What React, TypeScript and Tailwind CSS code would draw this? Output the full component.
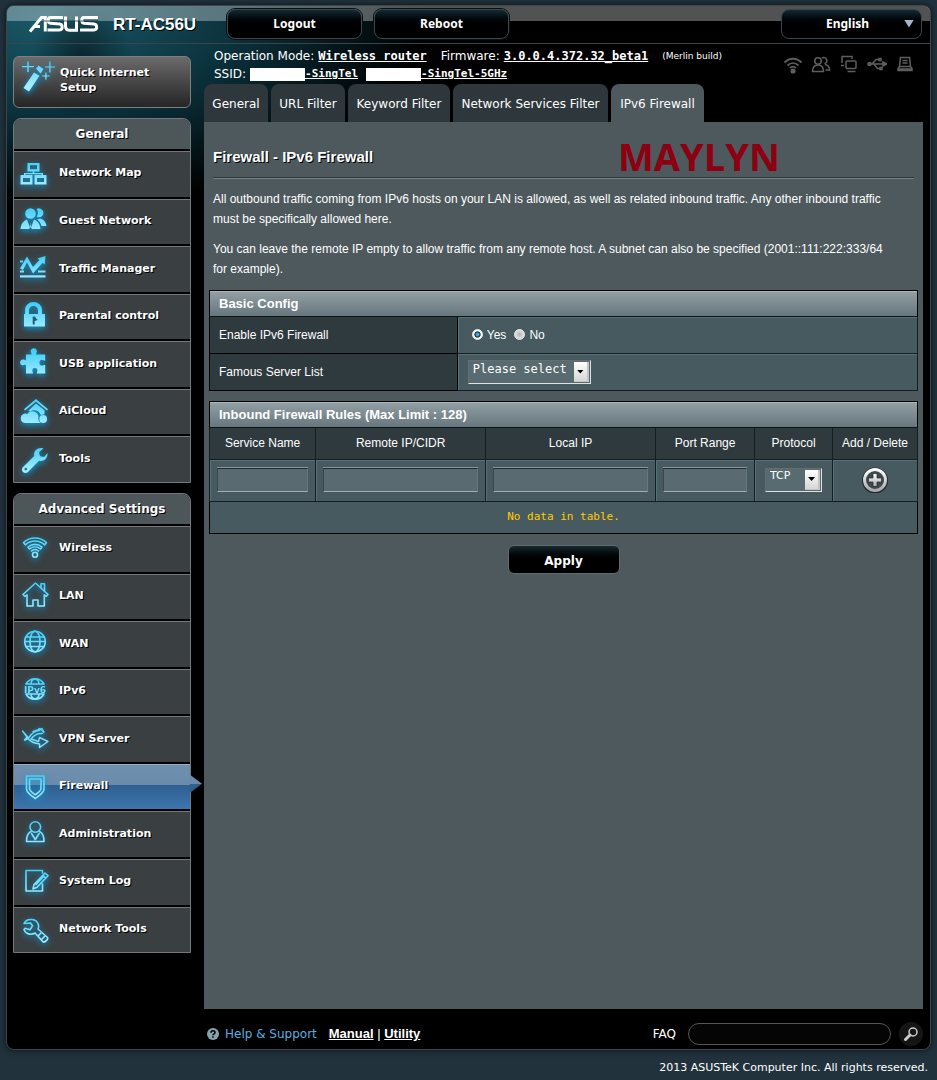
import React, { useState, type ReactNode } from 'react';
import clsx from 'clsx';

const verdana = "font-['DejaVu_Sans',Verdana,sans-serif]";
const arial = "font-['Liberation_Sans',Arial,sans-serif]";
const mono = "font-['DejaVu_Sans_Mono',monospace]";
const shadow = '[text-shadow:1px_1px_0_#000]';

const line = { fill: 'none', stroke: 'url(#ice)', strokeWidth: 1.6, strokeLinejoin: 'round', strokeLinecap: 'round' } as const;

const MenuIcon = ({ children }: { children: ReactNode }) => (
  <svg
    viewBox="0 0 32 32"
    className="size-8 shrink-0 overflow-visible [filter:drop-shadow(0_2px_3px_#0a9ad8)]"
    fill="url(#ice)"
    aria-hidden="true"
  >
    {children}
  </svg>
);

const generalMenu = [
  {
    label: 'Network Map',
    icon: (
      <>
        <path fillRule="evenodd" d="M9.500 5h12v8.500h-12zM12 7.300v4h7v-4z" />
        <path fillRule="evenodd" d="M2.500 17h12v9.500h-12zM5 20v4h7v-4zM16.500 17h12v9.500h-12zM19 20v4h7v-4z" />
        <path d="M14.700 13h1.600v2H25v2h-1.500v-.8h-16v.8H6v-2h8.700z" />
      </>
    ),
  },
  {
    label: 'Guest Network',
    icon: (
      <>
        <circle cx="12.500" cy="8.500" r="5.300" />
        <path d="M18.500 4a4.500 4.500 0 1 1 2 8.300c-.8 0-1.300-.2-1.800-.6a7 7 0 0 0-.2-7.700z" />
        <path d="M2.500 24c.5-5 3-8.500 6.500-9.500l3 8 .5-5 .5 5 3-8c3.500 1 6 4.500 6.500 9.500h-8.500l-1.500-2-1.500 2z" />
        <path d="M19 14.500l3-1c4 1 6 4 6.500 7.500h-5c-.7-3-2.300-5-4.500-6.500z" />
      </>
    ),
  },
  {
    label: 'Traffic Manager',
    icon: (
      <>
        <path d="M2 7.500h3v2H2zM2 22.300h25.500v2.200H2zM2 17.500h4v2H2zM20 17.500h7.500v2H20z" />
        <path d="M2 15.500L9 3.500l6 10.500 6.500-7-2-1.500 8-2.500-.8 8.500-2-1.700L15 20.500 9 9.500 5 17z" />
      </>
    ),
  },
  {
    label: 'Parental control',
    icon: (
      <>
        <path fillRule="evenodd" d="M7 13V9a8.500 8 0 0 1 17 0v4h3v12.500H6V13zM11 13h9V9.500a4.500 4.500 0 0 0-9 0z" />
        <path fill="#1d5c7a" d="M14.700 15.500h2l3 3.500-3 1v3.500h-2z" />
      </>
    ),
  },
  {
    label: 'USB application',
    icon: (
      <path d="M8 6.500h5.500c.6-1-1-2-.8-3.800a3.200 3.200 0 0 1 6.200 0c.2 1.800-1.300 2.800-.7 3.800h9v6c-1 .7-2.200-.9-3.700-.7-2.800.5-2.800 5.400 0 5.800 1.500.2 2.700-1.300 3.700-.6v8.500h-8.300c-.6-1 .9-2 .5-3.600-.6-2.400-4.600-2.400-5.100 0-.3 1.600 1.200 2.600.6 3.600H8V17c-.7-1-2 .6-3.700.3a3 3 0 0 1 0-5.800C6 11.200 7.300 12.700 8 12z" />
    ),
  },
  {
    label: 'AiCloud',
    icon: (
      <>
        <path d="M18 3L30 13.200l-1 1.300L18 5.800 7 14.500l-1-1.300z" />
        <path d="M18 7.500l8.500 6.700v4a4.500 4.500 0 0 0-3.500 1.300c-1.500-5-7-6.500-11-4l-1.700-.8z" />
        <path d="M7 27a4.700 4.700 0 0 1-.8-9.200c2-.6 2.800.4 3 1 0-3 7-6.500 11 .2 1 2-.6 2.700.3 5 .4 1.400 1.300 2.400 2.500 3z" />
        <circle cx="25.200" cy="23" r="3.900" />
      </>
    ),
  },
  {
    label: 'Tools',
    icon: (
      <path
        fillRule="evenodd"
        d="M25.500 5.500l-4.500 3.800 1 4 4 .8 3.500-4.100c.4 5-3.500 9-8.500 7.700L10.500 28.500a3.600 3.600 0 1 1-5-5L16.300 13C15 8 20 3.500 25.500 5.500zM7.800 24.700a1.300 1.300 0 1 0 .1 0z"
      />
    ),
  },
];

const advancedMenu = [
  {
    label: 'Wireless',
    icon: (
      <g {...line}>
        <path d="M5.500 9.500c6.500-6 16.500-6 23 0l-1.800 2.300c-5.600-5-13.800-5-19.400 0z" />
        <path d="M10 14c4.200-3.500 9.800-3.500 14 0l-1.500 2c-3.300-2.700-7.700-2.700-11 0z" />
        <path d="M13.500 18c2-1.700 5-1.700 7 0" />
        <circle cx="17" cy="21.800" r="2.500" />
      </g>
    ),
  },
  {
    label: 'LAN',
    icon: (
      <g {...line}>
        <path d="M5 14.500L17.500 3 30 14.500l-1.700 1.800-2-1.500V26H20v-6h-5v6H9V14.800l-2.300 1.500z" />
        <path d="M23 7.500V3.800h3.500v7" />
      </g>
    ),
  },
  {
    label: 'WAN',
    icon: (
      <g {...line}>
        <circle cx="17" cy="13.500" r="10.300" />
        <ellipse cx="17" cy="13.500" rx="5" ry="10.300" />
        <path d="M8 9h18M6.700 13.500h20.600M8 18.500h18" />
      </g>
    ),
  },
  {
    label: 'IPv6',
    icon: (
      <>
        <g {...line}>
          <path d="M8 9a10.300 10.300 0 0 1 18 0zM8 19a10.300 10.300 0 0 0 18 0zM13 8c1-5 7-5 8 0M13 20c1 5 7 5 8 0" />
        </g>
        <text
          x="17"
          y="17.500"
          textAnchor="middle"
          fontSize="9"
          fontFamily="DejaVu Sans"
          className="[text-shadow:none]"
        >
          IPv6
        </text>
      </>
    ),
  },
  {
    label: 'VPN Server',
    icon: (
      <g {...line} strokeWidth={1.4}>
        <path d="M4.500 8l6 7c4-6 7-7.500 11-7.500l-.5-2 5 3.500-2 1.500c-5-.5-8 1.500-11 5.500l7.500 2.500 1-4L30 18.500l-8.500 6 .2-3.500c-5-.5-9-2-11.700-5.500-1 1-2 1.500-3.500 1.500L9 14z" />
        <path d="M15 8.500l9-3 1.500 3" />
      </g>
    ),
  },
  {
    label: 'Firewall',
    icon: (
      <g {...line}>
        <path d="M8.500 5h17.500v13c0 4-5 6.500-8.700 9.500-3.800-3-8.800-5.500-8.800-9.500z" />
        <path d="M11.500 8h11.500v9.500c0 2.500-3 4.200-5.700 6.300-2.800-2.100-5.800-3.800-5.800-6.300z" />
      </g>
    ),
  },
  {
    label: 'Administration',
    icon: (
      <g {...line}>
        <circle cx="17.300" cy="9" r="5.300" />
        <path d="M13 13.500c-3 1.500-4.500 5.500-4.500 10h17.500c0-4.500-1.500-8.500-4.500-10M13.500 15.500l3.800 6 3.800-6" />
      </g>
    ),
  },
  {
    label: 'System Log',
    icon: (
      <g {...line}>
        <path d="M24.500 7V4.500H8V25h16.500v-7" />
        <path d="M15 23l1-4.500L27 7l3 2.700-11 11.500zM25 9.500l2.700 2.500M18 18.500l8-8.500" />
      </g>
    ),
  },
  {
    label: 'Network Tools',
    icon: (
      <g {...line}>
        <path d="M6 10.500c3-6 13-5 14.500 1.500.3 1.800 0 3-.5 4l9.500 8.500c1 1.500-2.500 5.500-4.500 4.300L17 20c-4 2.500-9.500 1-11-3.500l1-1.200 5 1.500 2.500-4-2-2.800z" />
        <path d="M20.500 22.500l2.500-2.500M24 26l2.500-2.500" />
      </g>
    ),
  },
];

const tabs = [
  { label: 'General', className: 'w-16' },
  { label: 'URL Filter', className: 'w-[74px]' },
  { label: 'Keyword Filter', className: 'w-[102px]' },
  { label: 'Network Services Filter', className: 'w-[155px]' },
  { label: 'IPv6 Firewall', className: 'w-[93px]' },
];

const Menu = ({
  title,
  items,
  active,
  onSelect,
  className,
}: {
  title: string;
  items: { label: string; icon: ReactNode }[];
  active: string;
  onSelect: (label: string) => void;
  className: string;
}) => (
  <nav aria-label={title} className="rounded-t-lg border border-[#70787b] bg-[#3a3f41]">
    <h2
      className={clsx(
        'flex h-8 items-center justify-center rounded-t-lg border-b-2 border-black bg-[#4d5659] text-xs font-bold',
        shadow
      )}
    >
      {title}
    </h2>
    <ul className={clsx('flex flex-col', className)}>
      {items.map((item) => (
        <li key={item.label} className="group flex grow flex-col">
          <a
            href="#"
            onClick={(e) => {
              e.preventDefault();
              onSelect(item.label);
            }}
            className={clsx(
              'relative flex grow items-center gap-[9px] border-t pb-px pl-1 text-[11px] font-bold',
              'border-b-2 border-b-black group-last:border-b-0',
              shadow,
              item.label === active
                ? 'border-t-[#8fb0cc] bg-[linear-gradient(#7090ae_0,#6a8bab_46%,#2f6090_46%,#3d75ad_100%)]'
                : 'border-t-[#72787b]'
            )}
          >
            <MenuIcon>{item.icon}</MenuIcon>
            {item.label}
            {item.label === active && (
              <span className="absolute top-2.5 left-full h-[18px] w-3 bg-[linear-gradient(#6a8bab_50%,#2f6090_50%)] [clip-path:polygon(0_0,100%_50%,0_100%)]" />
            )}
          </a>
        </li>
      ))}
    </ul>
  </nav>
);

const Sidebar = () => {
  const [active, setActive] = useState('Firewall');
  return (
    <aside className="flex w-[178px] shrink-0 flex-col gap-2.5">
      <a
        href="#"
        className={clsx(
          'flex h-[52px] gap-2 rounded-md border border-[#7c8082] bg-linear-to-b from-[#6b6b6b] to-[#262626] pl-1.5 text-[11px] leading-[15px] font-bold',
          shadow
        )}
      >
        <MenuIcon>
          <path d="M14 15.500l5.500 3.300L9 34.500 3.500 31zM16 11.500l2.500-3 5 3.500-3 4.500z" />
          <path d="M7.300 4.500h1.400V9H14v1.200H8.700V15H7.300v-4.800H2V9h5.300zM29.300 4.500h1.200v5H35v1h-4.500v5h-1.200v-5H25v-1h4.300zM25.300 15.500h1.200v3h3v1h-3v3h-1.200v-3h-3v-1h3z" />
        </MenuIcon>
        <span className="w-24 pt-2">Quick Internet Setup</span>
      </a>
      <Menu title="General" items={generalMenu} active={active} onSelect={setActive} className="min-h-[331px]" />
      <Menu
        title="Advanced Settings"
        items={advancedMenu}
        active={active}
        onSelect={setActive}
        className="min-h-[426px]"
      />
    </aside>
  );
};

const DarkButton = ({ children, className }: { children: ReactNode; className: string }) => (
  <button
    type="button"
    className={clsx(
      "flex items-center justify-center rounded-lg border border-[#39474d] bg-linear-to-b from-[#152a33] to-black to-60% font-['Noto_Sans',sans-serif] text-xs font-bold shadow-[0_0_0_1px_#0a0f12]",
      className
    )}
  >
    {children}
  </button>
);

const Header = () => (
  <header className="flex h-[38px] items-center rounded-t-md border-b border-[#3b4548] bg-[linear-gradient(rgba(255,255,255,0.32)_15px,transparent_15px)] pr-2 pb-0.5 pl-[22px]">
    <svg viewBox="0 0 70 18" className="h-[18px] w-[70px]" role="img" aria-label="ASUS">
      <g fill="none" stroke="#fff" strokeWidth="3">
        <path d="M1 16.500L12.500 2.500h3.800v14M6 11.500h5" />
        <path d="M34 2.500H21.500c-3 0-3 5.500 0 5.800l9 .7c3.500.3 3.500 6 0 6H18.500" />
        <path d="M36.500 1.500v9.500c0 3 1 4.200 3.500 4.200h7.500V1.500" />
        <path d="M69 2.500H55c-3 0-3 5.500 0 5.800l10 .7c3.500.3 3.500 6 0 6H51" />
      </g>
      <path d="M14 6h55" stroke="#16333c" strokeWidth="0.800" />
    </svg>
    <span className={clsx('ml-3.5 w-[114px] pt-1 text-[17px] font-bold', arial, shadow)}>RT-AC56U</span>
    <DarkButton className="h-[30px] w-[135px]">Logout</DarkButton>
    <DarkButton className="ml-3 h-[30px] w-[135px]">Reboot</DarkButton>
    <div className="relative ml-auto">
      <select
        aria-label="Language"
        className="block h-[30px] w-[141px] appearance-none rounded-lg border border-[#39474d] bg-linear-to-b from-[#152a33] to-black to-60% pr-2 text-center font-['Noto_Sans',sans-serif] text-xs font-bold"
      >
        <option>English</option>
      </select>
      <span className="pointer-events-none absolute top-[11px] right-2 h-2 w-2.5 bg-[#a5b4c8] [clip-path:polygon(0_0,100%_0,50%_100%)]" />
    </div>
  </header>
);

const StatusIcons = () => (
  <div className="flex gap-2 pt-2.5 pr-2 text-[#5e5e5e]">
    {[
      <>
        <path d="M1.500 8.500c5-5 12-5 17 0M4.500 11.500c3.300-3.300 7.700-3.300 11 0M7 14c1.800-1.700 4.200-1.700 6 0" strokeWidth="1.800" />
        <circle cx="10" cy="17" r="1.800" fill="currentColor" />
      </>,
      <>
        <circle cx="7" cy="7" r="3.200" />
        <path d="M1.500 17.500c0-4 2-6.500 5.500-6.500s5.500 2.500 5.500 6.500zM11 4a3.200 3.200 0 1 1 2.500 5.800M14 10.500c3 .5 4.500 2.500 4.500 5.500h-4" />
      </>,
      <>
        <path d="M13 5V2.500H3V9M2 11.500h3" />
        <rect x="7" y="7" width="10" height="7.500" rx="1" />
        <path d="M8.500 17.500h8" />
      </>,
      <>
        <path d="M1 10h16M5 10l4-4.500h3M7 10l3.500 4.500H13" />
        <path d="M16 8l4 2-4 2z" fill="currentColor" />
        <circle cx="2.500" cy="10" r="1.500" fill="currentColor" />
        <path d="M12 4.500h2v2h-2zM13 13.500h2v2h-2z" />
      </>,
      <>
        <path d="M5.500 3.500h9l1 9h-11zM7.500 6.500h5M7.500 9h5M4.500 12.500l-1.500 2v2h14v-2l-1.500-2" />
        <path d="M3 15.500h14" strokeWidth="2.500" />
      </>,
    ].map((shape, i) => (
      <svg
        key={i}
        viewBox="0 0 20 20"
        className="size-5"
        fill="none"
        stroke="currentColor"
        strokeWidth="1.500"
        aria-hidden="true"
      >
        {shape}
      </svg>
    ))}
  </div>
);

const Info = () => (
  <div className="flex h-10 justify-between pl-2.5 text-xs leading-[18px]">
    <div className="pt-[3px] whitespace-nowrap">
      <div className="flex">
        Operation Mode:
        <a href="#" className={clsx('ml-1 font-bold underline', mono)}>
          Wireless router
        </a>
        <span className="ml-3.5">Firmware:</span>
        <a href="#" className={clsx('ml-1 font-bold underline', mono)}>
          3.0.0.4.372.32_beta1
        </a>
        <span className="ml-3.5 text-[9px]">(Merlin build)</span>
      </div>
      <div className="flex items-center">
        SSID:
        <span className="ml-1 h-[13px] w-[55px] bg-white" />
        <span className={clsx('text-[11px] font-bold underline', mono)}>-SingTel</span>
        <span className="ml-2 h-[13px] w-[55px] bg-white" />
        <span className={clsx('text-[11px] font-bold underline', mono)}>-SingTel-5GHz</span>
      </div>
    </div>
    <StatusIcons />
  </div>
);

const Tabs = () => {
  const [current, setCurrent] = useState('IPv6 Firewall');
  return (
    <div role="tablist" className="flex gap-[3px]">
      {tabs.map((tab) => (
        <button
          key={tab.label}
          type="button"
          role="tab"
          aria-selected={tab.label === current}
          onClick={() => setCurrent(tab.label)}
          className={clsx(
            'h-[38px] rounded-t-lg pt-0.5 text-xs whitespace-nowrap',
            tab.className,
            tab.label === current ? 'bg-[#4d595d]' : 'bg-[#2e383c]'
          )}
        >
          {tab.label}
        </button>
      ))}
    </div>
  );
};

const Dropdown = ({
  id,
  label,
  value,
  className,
}: {
  id: string;
  label?: string;
  value: string;
  className: string;
}) => (
  <div className="relative inline-block align-middle">
    <select
      id={id}
      aria-label={label}
      className={clsx(
        'block h-6 appearance-none border border-t-[#6b6b6b] border-r-[#e0e0e0] border-b-[#e0e0e0] border-l-[#6b6b6b] bg-[#576b71] pb-1.5 pl-1 text-white',
        className
      )}
    >
      <option>{value}</option>
    </select>
    <span className="pointer-events-none absolute top-0.5 right-0.5 flex h-5 w-[15px] items-center justify-center border-r-2 border-b border-[#c4c4c4] bg-linear-to-b from-white to-[#d6d6d6]">
      <span className="h-1 w-[7px] bg-black [clip-path:polygon(0_0,100%_0,50%_100%)]" />
    </span>
  </div>
);

const heading =
  'h-[26px] border-b border-[#0c1416] bg-linear-to-b from-[#92a0a5] to-[#66757c] pl-[9px] text-left text-[13px] font-bold shadow-[inset_0_1px_0_#a9b6bb]';
const cell = 'border border-[#141d20] bg-[#475a5f] shadow-[inset_1px_1px_0_#5a7077]';

const BasicConfig = () => {
  const [enabled, setEnabled] = useState(true);
  return (
    <table className="w-full table-fixed border-collapse border border-black">
      <colgroup>
        <col className="w-[35%]" />
        <col />
      </colgroup>
      <thead>
        <tr>
          <th colSpan={2} className={heading}>
            Basic Config
          </th>
        </tr>
      </thead>
      <tbody>
        <tr className="h-[37px]">
          <th scope="row" className="border border-black bg-[#2f3a3e] pl-[9px] text-left font-normal">
            Enable IPv6 Firewall
          </th>
          <td className={cell}>
            <div className="flex items-center pl-3.5">
              {['Yes', 'No'].map((option) => (
                <label key={option} className="mr-2 flex items-center gap-1">
                  <input
                    type="radio"
                    name="ipv6_fw"
                    checked={enabled === (option === 'Yes')}
                    onChange={() => setEnabled(option === 'Yes')}
                    className="mb-0.5 size-[11px] appearance-none rounded-full border border-[#e4e4e4] bg-[radial-gradient(#b4b4b4,#f4f4f4)] checked:bg-[radial-gradient(#3aa8e8_20%,#112233_42%,#ffffff_56%)]"
                  />
                  {option}
                </label>
              ))}
            </div>
          </td>
        </tr>
        <tr className="h-[37px]">
          <th scope="row" className="border border-black bg-[#2f3a3e] pl-[9px] text-left font-normal">
            <label htmlFor="famous">Famous Server List</label>
          </th>
          <td className={clsx(cell, 'pl-2.5')}>
            <Dropdown id="famous" value="Please select" className={clsx('w-[123px] text-xs', mono)} />
          </td>
        </tr>
      </tbody>
    </table>
  );
};

const RulesTable = () => (
  <table className="w-full table-fixed border-collapse border border-black text-center">
    <colgroup>
      <col className="w-[15%]" />
      <col className="w-[24%]" />
      <col className="w-[24%]" />
      <col className="w-[14%]" />
      <col className="w-[11%]" />
      <col className="w-[12%]" />
    </colgroup>
    <thead>
      <tr>
        <th colSpan={6} className={heading}>
          Inbound Firewall Rules (Max Limit : 128)
        </th>
      </tr>
      <tr className="h-8">
        {['Service Name', 'Remote IP/CIDR', 'Local IP', 'Port Range', 'Protocol', 'Add / Delete'].map((name) => (
          <th key={name} className="border border-[#141d20] bg-[#2f3a3e] pb-0.5 font-normal">
            {name}
          </th>
        ))}
      </tr>
    </thead>
    <tbody>
      <tr className="h-[42px]">
        {['Service Name', 'Remote IP/CIDR', 'Local IP', 'Port Range'].map((name) => (
          <td key={name} className={clsx(cell, 'px-[7px] pb-0.5')}>
            <input
              type="text"
              aria-label={name}
              className="block h-6 w-full border border-t-[#20282b] border-r-[#69777d] border-b-[#a3adb1] border-l-[#3c464a] bg-[#596a70] px-1 shadow-[0_-1px_0_#8b979b]"
            />
          </td>
        ))}
        <td className={clsx(cell, 'pb-0.5')}>
          <Dropdown id="proto" label="Protocol" value="TCP" className={clsx('w-[57px] text-[11px]', verdana)} />
        </td>
        <td className={clsx(cell, 'pb-0.5')}>
          <button type="button" aria-label="Add rule" className="block w-full">
            <svg viewBox="0 0 26 26" className="mx-auto size-[26px]">
              <defs>
                <linearGradient id="steel" x1="0" y1="0" x2="0" y2="1">
                  <stop offset="0" stopColor="#fff" />
                  <stop offset="1" stopColor="#a8a8a8" />
                </linearGradient>
              </defs>
              <circle cx="13" cy="13.500" r="11" fill="none" stroke="#20282b" strokeWidth="4" />
              <circle cx="13" cy="13" r="10.500" fill="#3c4a4f" stroke="url(#steel)" strokeWidth="3" />
              <path d="M11 6.500h4V11h4.500v4H15v4.500h-4V15H6.500v-4H11z" fill="url(#steel)" stroke="#20282b" strokeWidth="0.700" />
            </svg>
          </button>
        </td>
      </tr>
      <tr className="h-8">
        <td colSpan={6} className={clsx('border border-black bg-[#475a5f] text-[11px] text-[#ffcc00]', mono)}>
          No data in table.
        </td>
      </tr>
    </tbody>
  </table>
);

const Footer = () => (
  <footer className="flex items-center pt-[13px] pl-[3px] text-xs whitespace-nowrap">
    <svg viewBox="0 0 12 12" className="size-3" aria-hidden="true">
      <circle cx="6" cy="6" r="6" fill="#86a4b0" />
      <path d="M4 4.700c0-2.700 4-2.700 4 0C8 6 6 6 6 7.300M6 8.300v1.500" fill="none" stroke="#000" strokeWidth="1.600" />
    </svg>
    <span className="ml-1.5 text-[#58aee0]">Help &amp; Support</span>
    <span className={clsx('ml-3 text-[13px]', arial)}>
      <a href="#" className="font-bold underline">
        Manual
      </a>{' '}
      |{' '}
      <a href="#" className="font-bold underline">
        Utility
      </a>
    </span>
    <label htmlFor="faq" className="mr-3 ml-auto">
      FAQ
    </label>
    <input id="faq" type="text" className="h-[22px] w-[203px] rounded-full border border-[#555] bg-[#050505] px-3" />
    <button type="button" aria-label="Search" className="ml-2 flex size-6 items-center justify-center rounded-full bg-[#151515]">
      <svg viewBox="0 0 16 16" className="size-4" fill="none" stroke="#ccc">
        <circle cx="10" cy="6" r="4" strokeWidth="1.500" />
        <path d="M7 9l-4.500 4.500" strokeWidth="3" strokeLinecap="round" />
      </svg>
    </button>
  </footer>
);

const App = () => (
  <div className={clsx('min-h-screen bg-[#21323d] px-1.5 pt-[5px] text-xs text-white', verdana)}>
    <svg className="absolute size-0" aria-hidden="true">
      <defs>
        <linearGradient id="ice" gradientUnits="userSpaceOnUse" x1="0" y1="2" x2="0" y2="28">
          <stop offset="0" stopColor="#3fcdf7" />
          <stop offset="1" stopColor="#a4ecff" />
        </linearGradient>
      </defs>
    </svg>
    <div className="rounded-lg border border-[#3d4649] bg-black bg-[radial-gradient(ellipse_50px_60px_at_75px_55px,rgba(5,20,26,0.7),transparent),radial-gradient(ellipse_380px_190px_at_40px_10px,#1a5a69,#0b323d_50%,transparent)] shadow-[0_0_6px_#0a1216]">
      <Header />
      <div className="flex items-stretch pr-[7px] pb-[3px]">
        <div className="pt-3 pr-[13px] pl-1.5">
          <Sidebar />
        </div>
        <div className="min-w-0 grow">
          <Info />
          <Tabs />
          <main className={clsx('min-h-[887px] bg-[#4d595d] px-[5px] pt-3', arial)}>
            <div className="mx-1 flex h-11 items-center border-b border-[#2b3438] shadow-[0_1px_0_#72858c]">
              <h1 className={clsx('w-[405px] pt-0.5 text-[15px] font-bold', shadow)}>Firewall - IPv6 Firewall</h1>
              <span className="font-['Open_Sans',sans-serif] text-[38px] leading-none font-bold text-[#8c0012]">
                MAYLYN
              </span>
            </div>
            <div className="mx-1 mt-[11px] mb-[11px] space-y-2.5 pr-5 leading-5">
              <p>
                All outbound traffic coming from IPv6 hosts on your LAN is allowed, as well as related inbound traffic.
                Any other inbound traffic must be specifically allowed here.
              </p>
              <p>
                You can leave the remote IP empty to allow traffic from any remote host. A subnet can also be specified
                (2001::111:222:333/64 for example).
              </p>
            </div>
            <div className="space-y-2.5">
              <BasicConfig />
              <RulesTable />
            </div>
            <button
              type="button"
              className={clsx(
                'mx-auto mt-[11px] block h-[29px] w-28 rounded-md border border-[#5f6b6f] bg-linear-to-b from-[#17292f] to-black to-60% pt-0.5 text-xs font-bold',
                verdana
              )}
            >
              Apply
            </button>
          </main>
          <Footer />
        </div>
      </div>
    </div>
    <p className="py-2.5 pr-[3px] text-right text-[11px] leading-4">
      2013 ASUSTeK Computer Inc. All rights reserved.
    </p>
  </div>
);

export default App;
